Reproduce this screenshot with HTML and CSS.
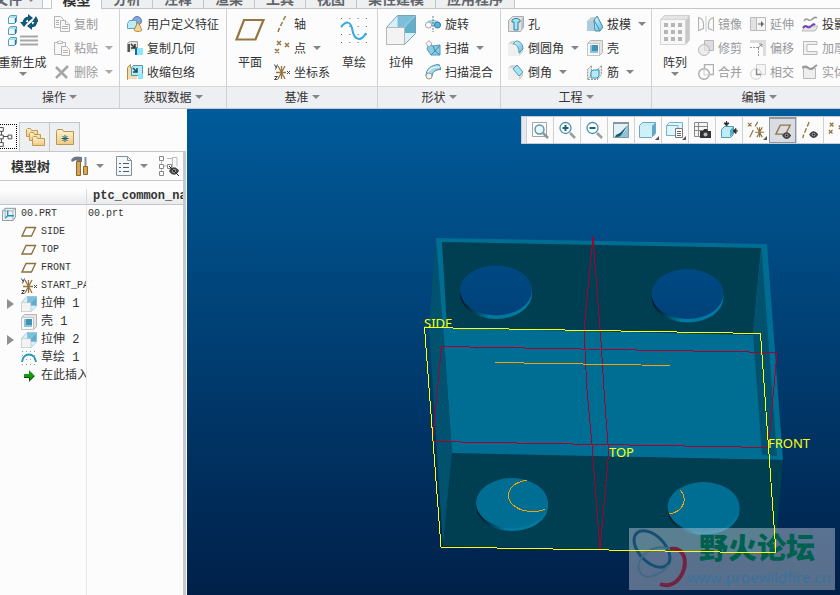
FILE: index.html
```html
<!DOCTYPE html>
<html lang="zh-CN">
<head>
<meta charset="utf-8">
<title>00.PRT</title>
<link rel="stylesheet" href="styles.css">
</head>
<body>
<svg class="sprite" aria-hidden="true">
  <linearGradient id="ice" x1="0" y1="0" x2="1" y2="1"><stop offset="0" stop-color="#e2f5fc"/><stop offset="1" stop-color="#62b8d8"/></linearGradient>
  <linearGradient id="sand" x1="0" y1="0" x2="0" y2="1"><stop offset="0" stop-color="#fff3d4"/><stop offset="1" stop-color="#eec982"/></linearGradient>
  <symbol id="copy" viewBox="0 0 16 16"><g fill="#f8f8f8" stroke="#b5b5b5"><path d="M.5.500h6l3 3v8h-9z"/><path d="M6.500 4.500h5l4 4v7h-9z"/><path d="M11.500 4.500v4h4M8 10.500h6M8 12.500h6M2 4.500h3M2 6.500h3M2 8.500h3"/></g></symbol>
  <symbol id="paste" viewBox="0 0 16 16"><g fill="#f8f8f8" stroke="#b5b5b5"><path d="M.5 2.500h11v12h-11z"/><path d="M3.500 3.500v-2h1.500l1-1 1 1h1.500v2z"/><path d="M7.500 6.500h5l3 3v6h-8zM9 10.500h5M9 12.500h5"/></g></symbol>
  <symbol id="delete" viewBox="0 0 16 16"><path d="M2 3l11 11M14 2L2 14" stroke="#a5a5a5" stroke-width="2.500"/></symbol>
  <symbol id="regen" viewBox="0 0 30 32"><g stroke="#5c9cb4" fill="#a9e0f0"><path d="M.500 3.500l2-2h6v6l-2 2h-6zM.500 14.500l2-2h6v6l-2 2h-6zM.500 25.500l2-2h6v6l-2 2h-6z"/></g><path d="M1 4h5v5H1zM1 15h5v5H1zM1 26h5v5H1z" fill="#effbff"/><path d="M7.500 4v5M7.500 15v5M7.500 26v5" stroke="#277a9c"/><g fill="none" stroke="#125978" stroke-width="3"><path d="M16 10c0-4 2-6 5-6"/><path d="M28 6c0 4-2 6-5 6"/></g><path d="M12 8h8l-4 5zM24 8h7l-3-6zM20 0l5 4-5 4zM24 8v8l-5-4z" fill="#125978"/><path d="M12 22.500h18M12 26.500h18M12 30.500h18" stroke="#a7a7a7" stroke-width="2"/></symbol>
  <symbol id="udf" viewBox="0 0 16 16"><circle cx="10" cy="5" r="4.500" fill="#8aa5d8" stroke="#5d7bb5"/><path d="M.500 7.500l2-3h7v5l-2 3h-7z" fill="#bfeaf7" stroke="#60a5bd"/><path d="M11 6l-4 8c1 2 7 2 8 0z" fill="#f2d49c" stroke="#b68b43"/></symbol>
  <symbol id="copygeo" viewBox="0 0 16 16"><path d="M.500 12V3.500l3-2h7v8" fill="#e3e3e3" stroke="#9a9a9a"/><path d="M1 4h2v8H1z" fill="#555"/><path d="M4 4l4 4M8 4v4H4" stroke="#333" stroke-width="1.500" fill="none"/><path d="M8 8l2-1v8H8z" fill="#156b94"/><path d="M10 8h6v7h-6z" fill="#8ee7fc"/></symbol>
  <symbol id="shrink" viewBox="0 0 16 16"><path d="M.500 3.500l3-3v12l-3 3z" fill="#f2d49c" stroke="#b68b43"/><path d="M1 4h9v11H1z" fill="#f5dbaa"/><path d="M4.500 3.500l2-2h9v8l-2 2h-9z" fill="#b8e9f6" stroke="#4e98b4"/><path d="M6 4l4 4M10 4v4H6" stroke="#124b64" stroke-width="1.500" fill="none"/><path d="M11 10h5v5h-5z" fill="#8ee7fc"/></symbol>
  <symbol id="plane" viewBox="0 0 30 24"><path d="M9 2h19.500l-8 19.500H1.500z" fill="none" stroke="#947643" stroke-width="2.200"/></symbol>
  <symbol id="plane-s" viewBox="0 0 16 16"><path d="M5 3.500h9.500l-4 8.500H1z" fill="none" stroke="#8d7040" stroke-width="1.400"/></symbol>
  <symbol id="axis" viewBox="0 0 16 16"><path d="M11.500 0l-2 4M8.500 6l-2 4M5.500 12l-1.500 4" stroke="#947643" stroke-width="1.500"/></symbol>
  <symbol id="points" viewBox="0 0 16 16"><path d="M3 1l4 4M7 1L3 5M11 3l4 4M15 3l-4 4M1 9l4 4M5 9l-4 4" stroke="#947643" stroke-width="1.500"/></symbol>
  <symbol id="csys" viewBox="0 0 16 16"><path d="M4 2l7 13M11 2L4 15M7.500 2v13M2 8.500h10" stroke="#947643" stroke-width="1.300"/><path d="M.5.500l1.500 3M3.500.500l-2 5M.500 12.500h3l-3 3h3M13 7l3 3M16 7l-3 3" stroke="#444" fill="none"/></symbol>
  <symbol id="sketch" viewBox="0 0 30 32"><path d="M2 4.500h26M2 12.500h26M2 20.500h26M2 28.500h26" stroke="#666" stroke-dasharray="1 7.300"/><path d="M2 13c5-6 9-6 11 1 1 7 3 11 7 11 3 0 5-2 7-6" fill="none" stroke="#33a9dc" stroke-width="2"/></symbol>
  <symbol id="extrude" viewBox="0 0 30 30"><path d="M.500 12.500L11.500.500h18v18l-11 11H.500z" fill="#d8f1fa" stroke="#7ba0ae"/><path d="M11.500 1H29v17H18.500l-7-5.500z" fill="#7dbfd9"/><path d="M18.500 12L29 1v17H18.500z" fill="#62afcc"/><path d="M18.500 12L29 1" stroke="#a6d8e9"/><path d="M.500 12.500h18v17H.500z" fill="#f3f3f3" stroke="#b7b7b7"/></symbol>
  <symbol id="revolve" viewBox="0 0 16 16"><path d="M2 6c2-3 10-3 12 0v4H2z" fill="#9bd6ea"/><circle cx="3.500" cy="9" r="3" fill="#fff" stroke="#a3a3a3"/><circle cx="12.500" cy="9" r="3" fill="#52b6da" stroke="#397b95"/><path d="M8 0v16" stroke="#5b8191" stroke-dasharray="2 1"/></symbol>
  <symbol id="sweep" viewBox="0 0 16 16"><path d="M4 4l4 2 7-1v10H6L2 9z" fill="#8ccbe2" stroke="#4c9abb"/><path d="M8 6l2 5 5 4M10 11l-4 4M10 11l5-6" stroke="#408bab" fill="none"/><path d="M1 3.500L4 .500 7 4 4 7z" fill="#f4f4f4" stroke="#aaa"/></symbol>
  <symbol id="sweepblend" viewBox="0 0 16 16"><path d="M1 12C1 5 6 1 14 .500l2 5c-6 0-9 3-9 7z" fill="url(#ice)" stroke="#468caa"/><path d="M3 8c2-4 6-5 12-5" stroke="#fff" fill="none"/><circle cx="4" cy="12" r="3" fill="#f1f1f1" stroke="#999"/></symbol>
  <symbol id="hole" viewBox="0 0 16 16"><path d="M.500 4.500l4-4h11v11l-3 4H.500z" fill="#e3e3e3" stroke="#aaa"/><path d="M13 4l2-3v11l-2 3z" fill="#c4c4c4"/><path d="M4 4c2-2 6-2 8 0v2h-2v8H6V6H4z" fill="#a6e3f5" stroke="#2385aa"/></symbol>
  <symbol id="round" viewBox="0 0 16 16"><path d="M0 4l3-3h6v3l6 4v4l-4 4H0z" fill="#d4d4d4"/><path d="M0 4h6c3 0 5 3 5 7v5H0z" fill="#efefef"/><path d="M5 4l3-3c5 0 7 4 7 8l-4 4c0-5-2-9-6-9z" fill="url(#ice)" stroke="#4b9fbe"/></symbol>
  <symbol id="chamfer" viewBox="0 0 16 16"><path d="M0 4l3-3h6l6 7v4l-4 4H0z" fill="#d4d4d4"/><path d="M0 4h5l6 7v5H0z" fill="#efefef"/><path d="M5 5l4-4 6 7-4 4z" fill="#a9e2f3" stroke="#4b9fbe"/></symbol>
  <symbol id="draft" viewBox="0 0 16 16"><path d="M0 5l4-4h6v14H0z" fill="#c9d1d5"/><path d="M0 5h7v10H0z" fill="#a9cddd"/><path d="M7 4l3-4 6 11-3 4H8z" fill="url(#ice)" stroke="#3a93b5"/><path d="M7 4l6 11" stroke="#3a93b5"/></symbol>
  <symbol id="shell" viewBox="0 0 16 16"><path d="M.500 3.500l3-3h12v12l-3 3H.500z" fill="#e5e5e5" stroke="#b5b5b5"/><path d="M.500 3.500h12v12H.500z" fill="#f8f8f8" stroke="#c5c5c5"/><path d="M3 5h8v8H3z" fill="#8cc3da"/><path d="M5 5h6v6H5z" fill="#3f94b6"/></symbol>
  <symbol id="rib" viewBox="0 0 16 16"><path d="M.500 5.500l4-4v9l-4 5zM10.500 5.500l4-4v9l-4 5z" fill="#e7e7e7" stroke="#999" stroke-dasharray="2 1"/><path d="M4 8l2-2h6v6l-2 2H4z" fill="#b4e9f8" stroke="#288fb8"/><path d="M1 15.500h10" stroke="#999" stroke-dasharray="2 1"/></symbol>
  <symbol id="pattern" viewBox="0 0 30 30"><path d="M.500 4.500l4-4h25v25l-4 4H.500z" fill="#e4e4e4" stroke="#d0d0d0"/><path d="M26 5l3-4v24l-3 4z" fill="#c8c8c8"/><path d="M.500 4.500h25v25H.500z" fill="#f7f7f7" stroke="#d5d5d5"/><path d="M4 10h18M4 17h18M4 24h18" stroke="#b5b5b5" stroke-width="4" stroke-dasharray="4 3"/></symbol>
  <symbol id="mirror" viewBox="0 0 16 16"><path d="M.500 1.500c4 1 5 4 5 7v4l-5 2zM15.500 1.500c-4 1-5 4-5 7v4l5 2z" fill="none" stroke="#b4b4b4" stroke-width="1.200"/><path d="M8 0v16" stroke="#ccc"/></symbol>
  <symbol id="trim" viewBox="0 0 16 16"><path d="M6.500.500h9v10h-9z" fill="#ddd" stroke="#b7b7b7"/><circle cx="6" cy="10" r="5.500" fill="#e7e7e7" fill-opacity=".7" stroke="#b7b7b7"/></symbol>
  <symbol id="merge" viewBox="0 0 16 16"><path d="M6.500 4V.500h9v10H12" fill="none" stroke="#b0b0b0" stroke-width="1.400"/><circle cx="6" cy="10" r="5.300" fill="none" stroke="#aaa" stroke-width="1.400"/><path d="M6 5v6h6" fill="none" stroke="#ccc"/></symbol>
  <symbol id="extend" viewBox="0 0 16 16"><path d="M.500 1.500h15v13H.500z" fill="#f5f5f5" stroke="#bbb"/><path d="M1 2h5v12H1z" fill="#e2e2e2"/><path d="M6.500 2v12" stroke="#bbb"/><path d="M8 7.500h3V5l3 3-3 3V8.500H8z" fill="#666"/></symbol>
  <symbol id="offset" viewBox="0 0 16 16"><path d="M0 0h16v16h-3V3H0z" fill="#ddd"/><path d="M0 7.500h8.500V16" fill="none" stroke="#999" stroke-dasharray="2 1"/><path d="M8 8l4-4M9 4h3v3" fill="none" stroke="#888"/></symbol>
  <symbol id="intersect" viewBox="0 0 16 16"><path d="M6.500.500h9v10h-9z" fill="#f5f5f5" stroke="#d2d2d2"/><circle cx="6" cy="10" r="5.300" fill="none" stroke="#d0d0d0"/><path d="M6.500 5v5.500H11" fill="none" stroke="#888" stroke-width="1.400"/></symbol>
  <symbol id="project" viewBox="0 0 16 16"><path d="M1 13l3-3h12l-3 5H0z" fill="#e5e5e5" stroke="#bbb"/><path d="M2 5c3-5 4 1 7-1s4-4 6-2" fill="none" stroke="#999" stroke-width="1.500"/><path d="M1 12c3-5 4 1 7-1s3-4 5-2" fill="none" stroke="#7340b7" stroke-width="2"/></symbol>
  <symbol id="thicken" viewBox="0 0 16 16"><path d="M15 1.500H1.500v13H15v-3H5v-7h10z" fill="#f0f0f0" stroke="#b8b8b8"/></symbol>
  <symbol id="solidify" viewBox="0 0 16 16"><path d="M1.500 14.500v-10c4-3 7 3 10 0h2v10z" fill="#eee" stroke="#b8b8b8"/><path d="M0 4c5-5 7 4 11 0l4-3" fill="none" stroke="#999" stroke-width="2"/></symbol>
  <symbol id="part" viewBox="0 0 16 16"><path d="M.500 4.500l3-3h12v10l-3 4H.500z" fill="#edf2f5" stroke="#7c8c95"/><path d="M.500 4.500h12v11M12.500 4.500l3-3M3.500 2v10" fill="none" stroke="#9aa6ac"/><path d="M6.500 4v6h7M6.500 10l-3 3" stroke="#1592be" fill="none" stroke-width="1.500"/></symbol>
  <symbol id="sketch-s" viewBox="0 0 16 16"><path d="M1 1.500h14M1 5.500h14M1 9.500h14M1 14.500h14" stroke="#999" stroke-dasharray="1 3"/><path d="M1 12C2 2 14 2 15 12" fill="none" stroke="#2997ba" stroke-width="2"/></symbol>
  <symbol id="insert" viewBox="0 0 16 16"><path d="M3 6h5V2l6 6-6 6v-4H3z" fill="#169a12"/><path d="M3 9.500h5.500v3L13 8" fill="none" stroke="#064b05"/></symbol>
  <symbol id="tree" viewBox="0 0 17 24"><path d="M1.500 4v16M1.500 12h7" stroke="#444" fill="none"/><path d="M0 2.500h3.500v4H0M0 10.500h3.500v4H0M0 18.500h3.500v4H0M8.500 10.500h4v4h-4z" fill="#fff" stroke="#444"/></symbol>
  <symbol id="folders" viewBox="0 0 20 20"><g fill="url(#sand)" stroke="#c29a51"><path d="M1.500 9.500v-7l1-1h3l1 2h6v6z"/><path d="M4.500 13.500v-7l1-1h3l1 2h6v6z"/><path d="M7.500 18.500v-8l1-1h3l1 2h7v7z"/></g></symbol>
  <symbol id="fav" viewBox="0 0 20 20"><path d="M1.500 17.500v-13l1-2h5l1 2h10v13z" fill="url(#sand)" stroke="#bb9554"/><path d="M10 8v7M6.500 11.500h7M7.500 9l5 5M12.500 9l-5 5" stroke="#17617c"/></symbol>
  <symbol id="tools" viewBox="0 0 18 20"><path d="M0 4c2-4 6-4 11-3v5H7L5 4 1 6z" fill="#6d7a85"/><path d="M5.500 5.500h4v14h-4z" fill="#d6a457" stroke="#8f6729"/><path d="M13.500 1h2v9h-2z" fill="#8d9299"/><path d="M12.500 10.500h4v8h-4z" fill="#dca652" stroke="#8f6729"/></symbol>
  <symbol id="list" viewBox="0 0 18 20"><path d="M1.500.500h11l4 4v15h-15z" fill="#f3f8fb" stroke="#82929b"/><path d="M12.500.500v4h4" fill="none" stroke="#82929b"/><path d="M4 7.500h2M4 11.500h2M4 15.500h2M8 7.500h6M8 11.500h6M8 15.500h6" stroke="#556"/></symbol>
  <symbol id="eye" viewBox="0 0 10 8"><path d="M0 4c3-5 7-5 10 0-3 5-7 5-10 0z" fill="#444"/><circle cx="5" cy="4" r="2" fill="#aaa"/><circle cx="5" cy="4" r="1" fill="#111"/></symbol>
  <symbol id="treehide" viewBox="0 0 20 20"><path d="M2.500 4v13M2.500 10h8M8 2.500h5M8 10.500h3M13 1.500h5v9M13.500 2v9" stroke="#bbb" fill="none"/><path d="M.500.500h4v4h-4zM.500 8.500h4v4h-4zM.500 15.500h4v4h-4zM8.500 8.500h4v4h-4z" fill="#fff" stroke="#888"/><use href="#eye" x="10" y="11" width="10" height="8"/><path d="M10 10l10 10" stroke="#222"/></symbol>
  <symbol id="zoomfit" viewBox="0 0 18 18"><path d="M1.500 1.500h14v14h-14z" fill="#fff" stroke="#a5a5a5"/><circle cx="8.500" cy="8.500" r="4.500" fill="#e7f8fe" stroke="#5793a9" stroke-width="1.400"/><path d="M12 12l5 5" stroke="#8e9498" stroke-width="2.500"/></symbol>
  <symbol id="zoomin" viewBox="0 0 18 18"><circle cx="7.500" cy="7" r="5.500" fill="#fff" stroke="#4d8faa" stroke-width="1.300"/><path d="M4.500 7h6M7.500 4v6" stroke="#146485" stroke-width="2"/><path d="M12 12l5 5" stroke="#999ea1" stroke-width="2.500"/></symbol>
  <symbol id="zoomout" viewBox="0 0 18 18"><circle cx="7.500" cy="7" r="5.500" fill="#fff" stroke="#4d8faa" stroke-width="1.300"/><path d="M4.500 7h6" stroke="#146485" stroke-width="2"/><path d="M12 12l5 5" stroke="#999ea1" stroke-width="2.500"/></symbol>
  <symbol id="repaint" viewBox="0 0 18 18"><path d="M1.500 1.500h15v15h-15z" fill="#e3f1f6" stroke="#8295a0"/><path d="M16 3v13H4c6-2 10-5 12-13z" fill="#8dc3d6"/><path d="M3 16c1-3 3-3 5-4l8-8-6 9c-2 3-4 3-7 3z" fill="#155c78"/><path d="M1 1h16v2H1z" fill="#87959c"/></symbol>
  <symbol id="shade" viewBox="0 0 18 18"><path d="M.500 4.500l3-3h13v11l-4 4H.500z" fill="#c4ecf7" stroke="#6eabc0"/><path d="M13 5l3-3v11l-3 3z" fill="#5caac6"/><path d="M1 5h12v11H1z" fill="#cef0fa"/></symbol>
  <symbol id="views" viewBox="0 0 18 18"><path d="M.500 4.500l3-3h13v11l-4 2H.500z" fill="#dff6fc" stroke="#76b2c6"/><path d="M1 4.500h11v9" fill="none" stroke="#76b2c6"/><path d="M9.500 7.500h7v9h-7z" fill="#fff" stroke="#777"/><path d="M11 10.500h4M11 12.500h4M11 14.500h4" stroke="#666"/></symbol>
  <symbol id="viewmgr" viewBox="0 0 18 18"><path d="M1.500 1.500h13v14h-13zM5.500 1v14M2 5.500h12M2 9.500h12" fill="#f5f5f5" stroke="#888"/><path d="M7 10h3l1-2h3l1 2h3v7H7z" fill="#333"/><circle cx="12.500" cy="13.500" r="2" fill="#bbb"/></symbol>
  <symbol id="orient" viewBox="0 0 18 18"><path d="M1.500 8.500l3-3h9v8l-3 3h-9z" fill="#bdebf8" stroke="#539cb5"/><path d="M10 9l3-3v7l-3 3z" fill="#5aabc8"/><path d="M4 2h5L6.500 5zM13 10l3-2.500v5zM6.500 0v3M15 10h3" fill="#333" stroke="#333"/></symbol>
  <symbol id="datum" viewBox="0 0 20 20"><path d="M1 2l4 4M5 2L1 6M12 1L9 6M7 10l-4 8M9 12.500h10M11 7l6 11M17 7l-6 11M14 7v11" stroke="#8f7140" stroke-width="1.300"/></symbol>
  <symbol id="planeeye" viewBox="0 0 20 20"><path d="M7 3.500h11l-5 10H2z" fill="none" stroke="#947643" stroke-width="1.500"/><use href="#eye" x="9" y="11" width="10" height="8"/></symbol>
  <symbol id="axiseye" viewBox="0 0 20 20"><path d="M9 1L7 6M6 8l-2 5M3 15l-1 4" stroke="#947643" stroke-width="1.500"/><use href="#eye" x="9" y="11" width="10" height="8"/></symbol>
  <symbol id="pointeye" viewBox="0 0 20 20"><path d="M2 2l4 4M6 2L2 6M1 10l4 4M5 10l-4 4M12 5l4 4M16 5l-4 4" stroke="#947643" stroke-width="1.500"/></symbol>
</svg>

<header class="ribbon">
  <nav class="tabs">
    <button class="tab file">文件<i class="caret"></i></button>
    <button class="tab active">模型</button>
    <button class="tab">分析</button>
    <button class="tab">注释</button>
    <button class="tab">渲染</button>
    <button class="tab">工具</button>
    <button class="tab">视图</button>
    <button class="tab wide">柔性建模</button>
    <button class="tab wide">应用程序</button>
  </nav>
  <div class="groups">
    <section class="group ops">
      <div class="tools">
        <button class="big"><svg><use href="#regen"/></svg><span>重新生成</span><i class="caret"></i></button>
        <div class="stack">
          <button disabled><svg><use href="#copy"/></svg>复制</button>
          <button disabled><svg><use href="#paste"/></svg>粘贴<i class="caret"></i></button>
          <button disabled><svg><use href="#delete"/></svg>删除<i class="caret"></i></button>
        </div>
      </div>
      <button class="title">操作<i class="caret"></i></button>
    </section>
    <section class="group data">
      <div class="tools">
        <div class="stack">
          <button><svg><use href="#udf"/></svg>用户定义特征</button>
          <button><svg><use href="#copygeo"/></svg>复制几何</button>
          <button><svg><use href="#shrink"/></svg>收缩包络</button>
        </div>
      </div>
      <button class="title">获取数据<i class="caret"></i></button>
    </section>
    <section class="group datums">
      <div class="tools">
        <button class="big"><svg><use href="#plane"/></svg><span>平面</span></button>
        <div class="stack">
          <button><svg><use href="#axis"/></svg>轴</button>
          <button><svg><use href="#points"/></svg>点<i class="caret"></i></button>
          <button><svg><use href="#csys"/></svg>坐标系</button>
        </div>
        <button class="big"><svg><use href="#sketch"/></svg><span>草绘</span></button>
      </div>
      <button class="title">基准<i class="caret"></i></button>
    </section>
    <section class="group shapes">
      <div class="tools">
        <button class="big"><svg><use href="#extrude"/></svg><span>拉伸</span></button>
        <div class="stack">
          <button><svg><use href="#revolve"/></svg>旋转</button>
          <button><svg><use href="#sweep"/></svg>扫描<i class="caret"></i></button>
          <button><svg><use href="#sweepblend"/></svg>扫描混合</button>
        </div>
      </div>
      <button class="title">形状<i class="caret"></i></button>
    </section>
    <section class="group engineering">
      <div class="tools">
        <div class="stack">
          <button><svg><use href="#hole"/></svg>孔</button>
          <button><svg><use href="#round"/></svg>倒圆角<i class="caret"></i></button>
          <button><svg><use href="#chamfer"/></svg>倒角<i class="caret"></i></button>
        </div>
        <div class="stack">
          <button><svg><use href="#draft"/></svg>拔模<i class="caret"></i></button>
          <button><svg><use href="#shell"/></svg>壳</button>
          <button><svg><use href="#rib"/></svg>筋<i class="caret"></i></button>
        </div>
      </div>
      <button class="title">工程<i class="caret"></i></button>
    </section>
    <section class="group editing">
      <div class="tools">
        <button class="big"><svg><use href="#pattern"/></svg><span>阵列</span><i class="caret"></i></button>
        <div class="stack">
          <button disabled><svg><use href="#mirror"/></svg>镜像</button>
          <button disabled><svg><use href="#trim"/></svg>修剪</button>
          <button disabled><svg><use href="#merge"/></svg>合并</button>
        </div>
        <div class="stack">
          <button disabled><svg><use href="#extend"/></svg>延伸</button>
          <button disabled><svg><use href="#offset"/></svg>偏移</button>
          <button disabled><svg><use href="#intersect"/></svg>相交</button>
        </div>
        <div class="stack">
          <button><svg><use href="#project"/></svg>投影</button>
          <button disabled><svg><use href="#thicken"/></svg>加厚</button>
          <button disabled><svg><use href="#solidify"/></svg>实体化</button>
        </div>
      </div>
      <button class="title">编辑<i class="caret"></i></button>
    </section>
  </div>
</header>

<main class="workspace">
  <aside class="navigator">
    <div class="navtabs">
      <button class="navtab current" aria-label="模型树"><svg><use href="#tree"/></svg></button>
      <button class="navtab" aria-label="文件夹"><svg><use href="#folders"/></svg></button>
      <button class="navtab" aria-label="收藏夹"><svg><use href="#fav"/></svg></button>
    </div>
    <div class="panel">
      <div class="treebar">
        <h2>模型树</h2>
        <button aria-label="设置"><svg><use href="#tools"/></svg><i class="caret"></i></button>
        <button aria-label="显示"><svg><use href="#list"/></svg><i class="caret"></i></button>
        <button aria-label="隐藏"><svg class="hide"><use href="#treehide"/></svg></button>
      </div>
      <div class="treearea">
        <table class="tree">
          <thead><tr><th class="name"></th><th>ptc_common_name</th></tr></thead>
          <tbody>
            <tr><td><div class="node root"><svg><use href="#part"/></svg>00.PRT</div></td><td>00.prt</td></tr>
            <tr><td><div class="node"><svg><use href="#plane-s"/></svg>SIDE</div></td><td></td></tr>
            <tr><td><div class="node"><svg><use href="#plane-s"/></svg>TOP</div></td><td></td></tr>
            <tr><td><div class="node"><svg><use href="#plane-s"/></svg>FRONT</div></td><td></td></tr>
            <tr><td><div class="node"><svg><use href="#csys"/></svg>START_PART</div></td><td></td></tr>
            <tr><td><div class="node feature parent"><svg><use href="#extrude"/></svg>拉伸 1</div></td><td></td></tr>
            <tr><td><div class="node feature"><svg><use href="#shell"/></svg>壳 1</div></td><td></td></tr>
            <tr><td><div class="node feature parent"><svg><use href="#extrude"/></svg>拉伸 2</div></td><td></td></tr>
            <tr><td><div class="node feature"><svg><use href="#sketch-s"/></svg>草绘 1</div></td><td></td></tr>
            <tr><td><div class="node feature"><svg><use href="#insert"/></svg>在此插入</div></td><td></td></tr>
          </tbody>
        </table>
      </div>
    </div>
  </aside>

  <section class="viewport">
    <svg class="model" viewBox="187 109 653 486" preserveAspectRatio="xMinYMin meet">
      <defs>
        <linearGradient id="rim"><stop offset="0" stop-color="#00151f"/><stop offset=".12" stop-color="#002c3c"/><stop offset=".4" stop-color="#00789f"/><stop offset="1" stop-color="#007ba3"/></linearGradient>
        <linearGradient id="through" x1="0" y1="0" x2="0" y2="1"><stop offset="0" stop-color="#004983"/><stop offset="1" stop-color="#00427a"/></linearGradient>
      </defs>
      <path d="M436 238L429 325l14 220 9-90-9-127z" fill="#00526e"/>
      <path d="M436 238l331 6 16 216-331-6-9-126z" fill="#006e92"/>
      <path d="M429 326l14-1 9 129-9 91z" fill="#00526e"/>
      <path d="M442 242l319 6-8 87-306-7z" fill="#003e52"/>
      <path d="M761.500 248l15.500 208-15-1-9-121z" fill="#00526e"/>
      <path d="M452 453l331 7-8 93-332-7z" fill="#003e52"/>
      <g fill="url(#rim)"><ellipse cx="496" cy="294" rx="36" ry="25"/><ellipse cx="687.500" cy="297.500" rx="36" ry="25"/><ellipse cx="512" cy="506" rx="36" ry="25"/><ellipse cx="703.500" cy="510" rx="36" ry="25"/></g>
      <g fill="url(#through)"><ellipse cx="496" cy="290.500" rx="36" ry="25"/><ellipse cx="687.500" cy="294" rx="36" ry="25"/></g>
      <g fill="#006e92"><ellipse cx="512" cy="503" rx="36" ry="25"/><ellipse cx="703.500" cy="507" rx="36" ry="25"/></g>
      <g class="watermark">
        <rect x="629" y="528" width="206" height="62" fill="#c5cedb" fill-opacity=".45"/>
        <g fill="none">
          <ellipse cx="652" cy="549" rx="22" ry="13" transform="rotate(46 652 549)" stroke="#174f72" stroke-width="3"/>
          <path d="M672 550c-19-10-39 10-32 22 5 9 19 4 29-7" stroke="#426985" stroke-width="2"/>
          <path d="M670 549c12-2 17 8 14 20-4 13-14 19-24 15" stroke="#722343" stroke-width="4"/>
        </g>
        <text class="forum" x="699" y="559">野火论坛</text>
        <text class="site" x="687" y="583">www.proewildfire.cn</text>
      </g>
      <g class="wire">
        <path class="datum" d="M441.500 346.500L777 352.500 768.500 447.500 432.500 441.500zM593 237l-9 93 3 60 5 55 8 105 8-90V445L604 390l-3-48z"/>
        <path class="curve" d="M495 362.500l175 3M527 480.500c-12 1-19 8-18.500 16 1 9 12 15 24 15 6 0 9 0 12.500-2.500M680 490c7 7 6 21-11 24"/>
        <path class="outline" d="M424.500 327.500L760.500 333.500 776 553 441 547z"/>
      </g>
      <g class="labels"><text x="424" y="328">SIDE</text><text x="609" y="457">TOP</text><text x="768" y="448">FRONT</text></g>
    </svg>
    <div class="viewbar">
      <button aria-label="重新调整"><svg><use href="#zoomfit"/></svg></button>
      <button aria-label="放大"><svg><use href="#zoomin"/></svg></button>
      <button aria-label="缩小"><svg><use href="#zoomout"/></svg></button>
      <button aria-label="重画"><svg><use href="#repaint"/></svg></button>
      <button class="more" aria-label="显示样式"><svg><use href="#shade"/></svg></button>
      <button class="more" aria-label="已保存方向"><svg><use href="#views"/></svg></button>
      <button aria-label="视图管理器"><svg><use href="#viewmgr"/></svg></button>
      <button aria-label="重定向"><svg><use href="#orient"/></svg></button>
      <button class="more" aria-label="基准显示"><svg><use href="#datum"/></svg></button>
      <button class="pressed" aria-label="平面显示"><svg><use href="#planeeye"/></svg></button>
      <button aria-label="轴显示"><svg><use href="#axiseye"/></svg></button>
      <button aria-label="点显示"><svg><use href="#pointeye"/></svg></button>
    </div>
  </section>
</main>
</body>
</html>
```
FILE: styles.css
```css
* { box-sizing: border-box; }
body {
  margin: 0;
  height: 100vh;
  display: flex;
  flex-direction: column;
  overflow: hidden;
  background: #fcfcfd;
  color: #333;
  font: 12px/16px "Noto Sans CJK SC", sans-serif;
}
button {
  display: flex;
  align-items: center;
  flex: none;
  margin: 0;
  padding: 0;
  border: 0;
  background: none;
  color: inherit;
  font: inherit;
  white-space: nowrap;
}
svg { display: block; flex: none; }
.sprite { position: absolute; width: 0; height: 0; }
.caret {
  flex: none;
  border: 4px solid transparent;
  border-top-color: #858585;
  border-bottom: 0;
}

/* Ribbon */
.ribbon { flex: none; overflow: hidden; border-bottom: 1px solid #c4c8ce; }
.tabs {
  display: flex;
  align-items: flex-end;
  height: 9px;
  border-bottom: 1px solid #c5c6c9;
}
.tab {
  width: 51px;
  height: 28px;
  padding-bottom: 2px;
  justify-content: center;
  align-items: flex-end;
  border-right: 1px solid #c5c6c9;
  background: #eeeff1;
  color: #62656a;
  font-size: 14px;
  font-weight: bold;
}
.tab.file { width: 43px; margin-right: 8px; justify-content: flex-end; padding-right: 7px; }
.tab.file .caret { margin: 0 0 4px 5px; }
.tab.active { height: 29px; margin-bottom: -1px; border-left: 1px solid #c5c6c9; background: #fcfcfd; color: #333; }
.tab.wide { width: 79px; }
.groups { display: flex; }
.group { flex: none; border-right: 1px solid #cfd1d4; }
.ops { width: 120px; }
.data { width: 107px; }
.datums, .engineering { width: 151px; }
.shapes { width: 123px; }
.editing { width: 215px; }
.tools { display: flex; gap: 9px; height: 77px; padding: 3px 0 0 8px; }
.ops .tools { padding-left: 0; }
.data .tools, .engineering .tools { padding-left: 7px; gap: 8px; }
.editing .tools { gap: 8px; }
.big {
  flex-direction: column;
  align-self: flex-start;
  width: 30px;
  padding-top: 2px;
  gap: 8px;
}
.ops .big { width: 45px; }
.big svg { width: 30px; height: 32px; }
.big .caret { margin-top: -6px; }
.stack button { height: 24px; }
.stack svg { width: 16px; height: 16px; margin-right: 4px; }
.stack .caret { margin-left: 7px; }
.stack button:disabled { color: #999; }
.stack button:disabled .caret { border-top-color: #aaa; }
.title {
  width: 100%;
  height: 22px;
  padding-bottom: 2px;
  justify-content: center;
  gap: 3px;
  border-top: 1px solid #d5d6d8;
  background: #eeeff2;
}

.workspace { display: flex; flex: 1; min-height: 0; }

/* Navigator */
.navigator { display: flex; flex-direction: column; flex: 0 0 187px; padding: 13px 1px 0 0; }
.navtabs { display: flex; height: 29px; }
.navtab {
  width: 30px;
  justify-content: center;
  border: 1px solid #c5c6c9;
  border-left: 0;
  border-bottom: 0;
  background: #eeeff1;
}
.navtab svg { width: 20px; height: 20px; }
.navtab.current { width: 20px; justify-content: flex-start; background: none; border-top: 0; }
.navtab.current svg { width: 17px; height: 25px; border: 1px dotted #000; border-left: 0; }
.panel {
  display: flex;
  flex-direction: column;
  flex: 1;
  min-height: 0;
  border-top: 1px solid #c5c6c9;
  border-right: 3px solid #c7c9cb;
}
.treebar {
  display: flex;
  align-items: center;
  flex: none;
  height: 29px;
  padding-left: 11px;
  border-bottom: 1px solid #c5c6c9;
}
.treebar h2 { flex: none; margin: 0 21px 0 0; font-size: 13px; line-height: 16px; white-space: nowrap; }
.treebar svg { width: 18px; height: 20px; }
.treebar .hide { width: 20px; }
.treebar .caret { margin: 0 11px 0 7px; }
.treearea {
  flex: 1;
  min-height: 0;
  margin-top: 8px;
  background: linear-gradient(#e7e8ea, #e7e8ea) 86px 0 / 1px 100% no-repeat;
}
.tree {
  width: 100%;
  border-collapse: separate;
  border-spacing: 0;
  table-layout: fixed;
  font-family: "Liberation Mono", "Noto Sans CJK SC", monospace;
}
.tree th, .tree td { padding: 0 0 0 1px; overflow: hidden; white-space: nowrap; text-align: left; }
.tree th {
  height: 16px;
  padding-left: 6px;
  border-bottom: 1px solid #c5c6c9;
  background: linear-gradient(#fff, #e9eaec);
  font-size: 12px;
  line-height: 15px;
}
.tree .name { width: 87px; border-right: 1px solid #d9dadc; }
.tree td { height: 18px; font-size: 10px; line-height: 16px; }
.tree td:first-child { padding: 0 1px 0 0; }
.node { display: flex; align-items: center; height: 18px; padding-left: 21px; overflow: hidden; }
.node svg { width: 16px; height: 16px; margin-right: 4px; }
.node.feature { font-size: 12px; }
.node.root { padding-left: 2px; }
.node.root svg { width: 14px; height: 14px; margin-right: 5px; }
.node.parent { padding-left: 7px; }
.node.parent::before {
  content: "";
  margin-right: 7px;
  border: 5px solid transparent;
  border-left: 7px solid #909090;
  border-right: 0;
}

/* Graphics window */
.viewport {
  position: relative;
  flex: 1;
  min-width: 0;
  overflow: hidden;
  background: linear-gradient(#005b9a, #002049);
}
.model { position: absolute; inset: 0; width: 100%; height: 100%; }
.wire { fill: none; stroke-width: 1; shape-rendering: crispEdges; }
.datum { stroke: #a40030; }
.curve { stroke: #f5a300; }
.outline { stroke: #ff0; }
.labels { fill: #ff0; font: 13px "Noto Sans", sans-serif; }
.forum { fill: #006050; font: 900 29px "Noto Sans CJK SC", sans-serif; }
.site { fill: #38729c; font: 15px "Open Sans", sans-serif; }
.viewbar {
  position: relative;
  display: flex;
  width: max-content;
  height: 28px;
  margin: 7px 0 0 334px;
  padding-left: 4px;
  border: 1px solid #c7cbd2;
  background: #e6e9f0;
}
.viewbar button {
  position: relative;
  width: 27px;
  justify-content: center;
  border-left: 1px solid #ced0d4;
  background: #fbfbfc;
}
.viewbar svg { width: 18px; height: 18px; }
.viewbar .pressed { border: 1px solid #92969d; border-top-width: 2px; background: #d9dce3; }
.viewbar .more::after {
  content: "";
  position: absolute;
  right: 2px;
  bottom: 3px;
  border-left: 4px solid transparent;
  border-bottom: 4px solid #555;
}
```
